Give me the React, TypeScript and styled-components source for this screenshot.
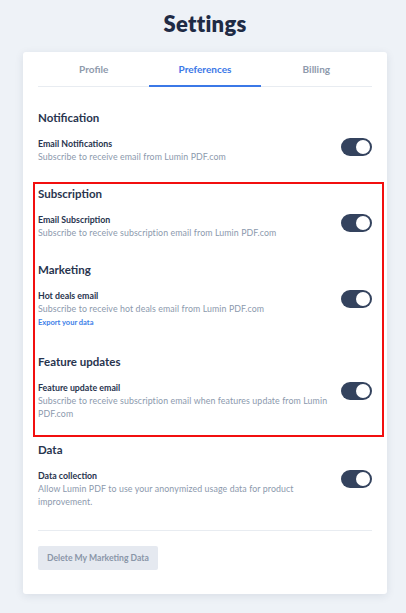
import React from "react";
import styled, { createGlobalStyle } from "styled-components";

const Global = createGlobalStyle`
  html, body { margin: 0; padding: 0; background: #eef2f7; }
  body { font-family: Lato, "Noto Sans", sans-serif; -webkit-font-smoothing: antialiased; }
  * { box-sizing: border-box; }
`;

const Page = styled.div`
  width: 406px;
  padding: 10px 19px 20px 23px;
`;

const Title = styled.h1`
  margin: 0;
  text-align: center;
  font-size: 22px;
  line-height: 28px;
  font-weight: 800;
  color: #1f2b45;
  letter-spacing: 0.3px;
`;

const Card = styled.div`
  margin-top: 14px;
  background: #fff;
  border-radius: 3px;
  box-shadow: 0 2px 8px rgba(30, 50, 80, 0.1);
  padding: 0 15px 24px;
`;

const Tabs = styled.div`
  display: grid;
  grid-template-columns: repeat(3, 1fr);
  border-bottom: 1px solid #e8ecf1;
`;

const Tab = styled.div<{ $active?: boolean }>`
  height: 35px;
  display: flex;
  align-items: center;
  justify-content: center;
  font-size: 10px;
  font-weight: 700;
  color: ${(p) => (p.$active ? "#3b78e7" : "#8e9aac")};
  border-bottom: 2px solid ${(p) => (p.$active ? "#3b78e7" : "transparent")};
  margin-bottom: -1px;
`;

const Section = styled.section<{ $top?: number }>`
  margin-top: ${(p) => p.$top ?? 22}px;
`;

const Highlight = styled.div`
  margin: 19px -12px 0 -5px;
  padding: 1px 10px 15px 3px;
  border: 2px solid #f20f0f;
`;

const Heading = styled.h2`
  margin: 0;
  font-size: 11.5px;
  line-height: 18px;
  font-weight: 700;
  color: #28344e;
`;

const Row = styled.div`
  display: flex;
  align-items: flex-start;
  gap: 12px;
  margin-top: 10px;
`;

const RowText = styled.div`
  flex: 1;
`;

const RowTitle = styled.div`
  font-size: 8.8px;
  line-height: 13px;
  font-weight: 700;
  color: #28344e;
`;

const RowDesc = styled.div`
  font-size: 8.8px;
  line-height: 13px;
  color: #8c99ad;
  letter-spacing: 0.1px;
`;

const ExportLink = styled.a`
  display: block;
  margin-top: 2px;
  font-size: 7.5px;
  line-height: 12px;
  font-weight: 700;
  color: #3b7ee8;
  text-decoration: none;
`;

const Toggle = styled.div`
  flex: none;
  width: 31px;
  height: 18px;
  margin-top: 1px;
  border-radius: 9px;
  background: #34435e;
  display: flex;
  align-items: center;
  justify-content: flex-end;
  padding: 2px;
`;

const Knob = styled.div`
  width: 14px;
  height: 14px;
  border-radius: 50%;
  background: #fff;
`;

const Divider = styled.hr`
  margin: 22px 0 14px;
  border: none;
  border-top: 1px solid #e8ecf1;
`;

const Button = styled.button`
  height: 24px;
  padding: 0 9px;
  border: none;
  border-radius: 2px;
  background: #e5e9f0;
  color: #8a96a8;
  font-family: inherit;
  font-size: 8.6px;
  font-weight: 700;
`;

type Item = { title: string; desc: string; link?: string };

const Setting = ({ title, desc, link }: Item) => (
  <Row>
    <RowText>
      <RowTitle>{title}</RowTitle>
      <RowDesc>{desc}</RowDesc>
      {link && <ExportLink href="#">{link}</ExportLink>}
    </RowText>
    <Toggle>
      <Knob />
    </Toggle>
  </Row>
);

export default function App() {
  return (
    <>
      <Global />
      <Page>
        <Title>Settings</Title>
        <Card>
          <Tabs>
            <Tab>Profile</Tab>
            <Tab $active>Preferences</Tab>
            <Tab>Billing</Tab>
          </Tabs>
          <Section>
            <Heading>Notification</Heading>
            <Setting title="Email Notifications" desc="Subscribe to receive email from Lumin PDF.com" />
          </Section>
          <Highlight>
            <Section $top={0}>
              <Heading>Subscription</Heading>
              <Setting
                title="Email Subscription"
                desc="Subscribe to receive subscription email from Lumin PDF.com"
              />
            </Section>
            <Section>
              <Heading>Marketing</Heading>
              <Setting
                title="Hot deals email"
                desc="Subscribe to receive hot deals email from Lumin PDF.com"
                link="Export your data"
              />
            </Section>
            <Section $top={24}>
              <Heading>Feature updates</Heading>
              <Setting
                title="Feature update email"
                desc="Subscribe to receive subscription email when features update from Lumin PDF.com"
              />
            </Section>
          </Highlight>
          <Section $top={4}>
            <Heading>Data</Heading>
            <Setting
              title="Data collection"
              desc="Allow Lumin PDF to use your anonymized usage data for product improvement."
            />
          </Section>
          <Divider />
          <Button>Delete My Marketing Data</Button>
        </Card>
      </Page>
    </>
  );
}
